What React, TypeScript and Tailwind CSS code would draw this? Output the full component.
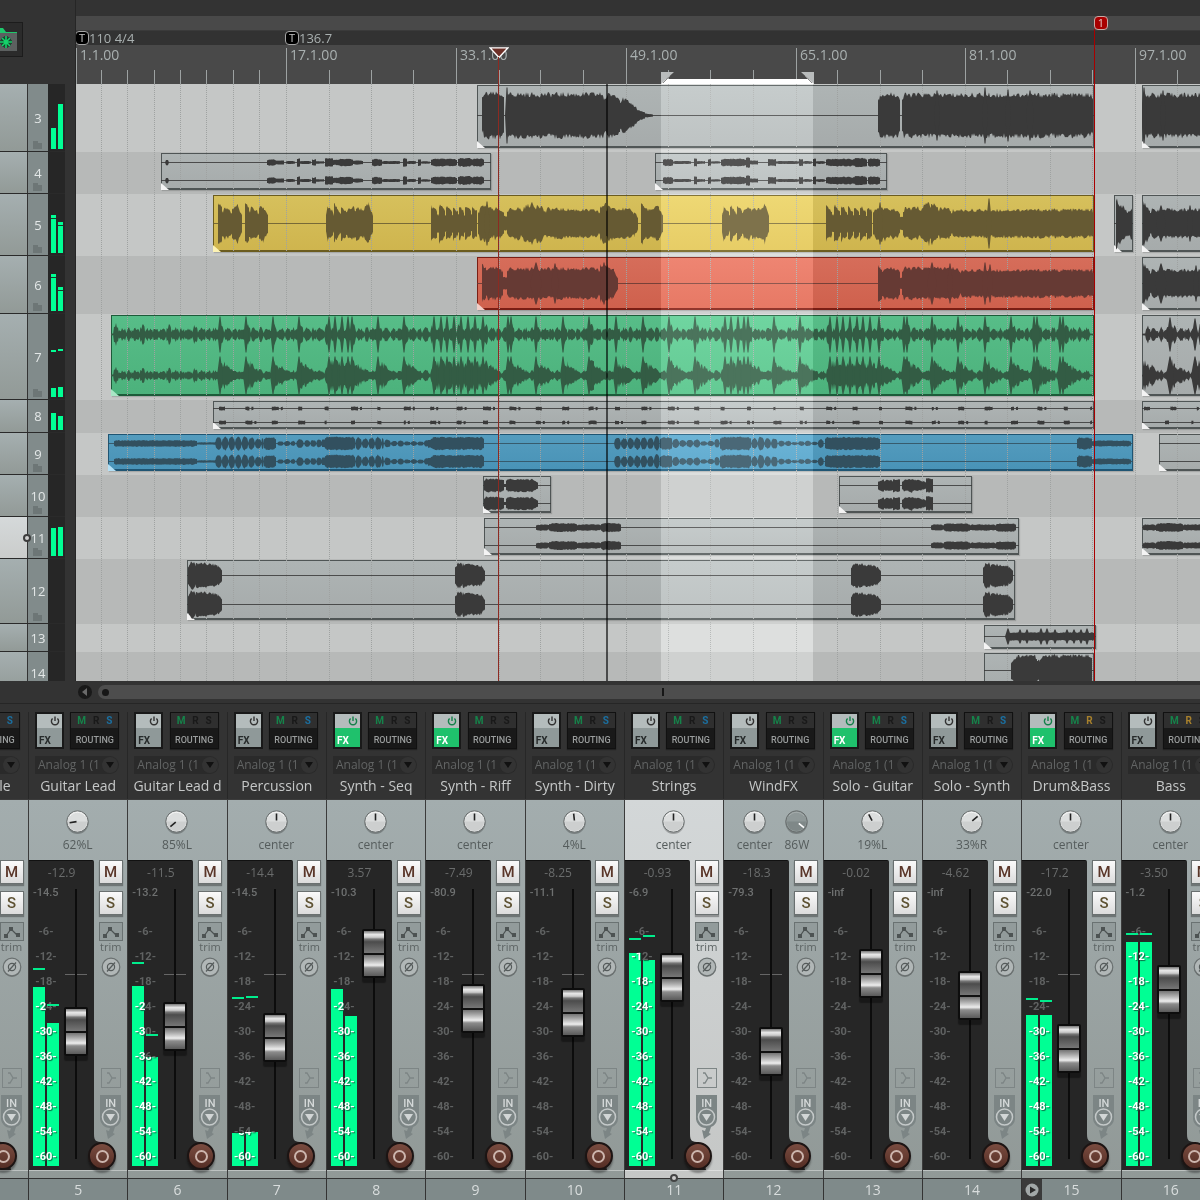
import React from "react";

type Seg = { x0: number; x1: number; a0: number; a1: number; lens?: boolean; rough?: boolean };
type Channel = { c: number; segs: Seg[]; spikes?: [number, number, number][] };
type Clip = { x: number; end: number; h: number; tone?: string; channels: Channel[] };
type Track = {
  n: number;
  h: number;
  folder?: boolean;
  meter?: [number, number];
  hold?: boolean;
  selected?: boolean;
  clips: Clip[];
};

const ORIGIN = 76;

/* ---------- waveform helpers ---------- */

const noise = (n: number) => {
  const v = Math.sin(n * 12.9898) * 43758.5453;
  return v - Math.floor(v);
};

const s = (x0: number, x1: number, a0: number, a1 = a0): Seg => ({ x0, x1, a0, a1 });
const lens = (x0: number, x1: number, a: number): Seg => ({ x0, x1, a0: a, a1: a, lens: true });

const beads = (x0: number, x1: number, step: number, a: number, vary = 0.3): Seg[] => {
  const out: Seg[] = [];
  for (let x = x0; x < x1 - 1; x += step) out.push(lens(x, Math.min(x + step + 0.4, x1), a * (1 - vary * noise(x))));
  return out;
};

function segPath(g: Seg, c: number) {
  const top: string[] = [];
  const bot: string[] = [];
  const len = g.x1 - g.x0;
  const step = Math.min(1, len / 4);
  for (let x = g.x0; x <= g.x1 + 0.01; x += step) {
    const t = (x - g.x0) / len;
    let a = g.a0 + (g.a1 - g.a0) * t;
    if (g.lens) a *= Math.pow(Math.max(0, Math.sin(Math.PI * t)), 0.5);
    else if (len > 8 && (t * len < 1.5 || (1 - t) * len < 1.5)) a *= 0.8;
    const low = g.rough ? 0.5 : 0.84;
    const span = g.rough ? 0.55 : 0.26;
    const up = a * (low + span * noise(Math.floor(x) + 3));
    const dn = a * (low + span * noise(Math.floor(x) + (g.rough ? 3 : 71)));
    top.push(`${x.toFixed(1)} ${(c - up).toFixed(1)}`);
    bot.unshift(`${x.toFixed(1)} ${(c + dn).toFixed(1)}`);
  }
  return `M${top.concat(bot).join("L")}Z`;
}

const spikePath = ([x, a, w]: [number, number, number], c: number) =>
  `M${x - w} ${c}L${x - 0.5} ${c - a}H${x + 0.5}L${x + w} ${c}L${x + 0.5} ${c + a}H${x - 0.5}Z`;

const dual = (a: number, b: number, segs: Seg[], spikes?: [number, number, number][]): Channel[] => [
  { c: a, segs, spikes },
  { c: b, segs, spikes },
];

/* ---------- arrangement data ---------- */

const t4a = [
  lens(165, 169, 3), s(267, 276, 3), s(276, 284, 2), s(286, 295, 1.5), s(297, 300, 4), s(300, 311, 1.5), s(312, 316, 3),
  s(316, 324, 1.2), s(325, 333, 4), s(333, 338, 2.5), s(338, 353, 3.6), s(353, 363, 2), s(372, 382, 3.5), s(382, 400, 1.5),
  s(403, 407, 4), s(407, 416, 1.5), s(418, 421, 3.2), s(421, 430, 1.2), s(431, 457, 3.6), s(458, 472, 4.2), s(472, 484, 3.8),
];
const t4b = [
  s(663, 673, 3.4), s(673, 691, 1.5), s(694, 697, 4), s(697, 705, 1.3), s(708, 711, 3.5), s(711, 720, 1.2), s(721, 746, 3.6),
  s(746, 750, 5), s(750, 758, 2), s(768, 776, 3.4), s(776, 799, 1.5), s(799, 803, 3.4), s(803, 812, 1.4), s(813, 816, 4),
  s(816, 825, 1.4), s(826, 853, 3.6), s(853, 867, 4.4), s(868, 880, 4),
];

const burst = (x: number): Seg[] => [
  s(x, x + 2, 8, 18), s(x + 2, x + 7, 16, 12), s(x + 8, x + 11, 19, 15), s(x + 11, x + 14, 14, 11), s(x + 15, x + 20, 17, 13),
  s(x + 20, x + 30, 14, 17), s(x + 30, x + 38, 16, 14), s(x + 38, x + 43, 15, 20), s(x + 43, x + 47, 18, 8), s(x + 6, x + 45, 10),
];
const stutter = (x: number): Seg[] => [
  s(x, x + 6, 18, 13), s(x + 8, x + 14, 19, 13), s(x + 15, x + 21, 18, 12), s(x + 22, x + 27, 17, 12),
  s(x + 28, x + 33, 17, 12), s(x + 34, x + 40, 17, 13), s(x + 41, x + 46, 16, 13), s(x + 4, x + 46, 9),
];

const t5: Seg[] = [
  s(218, 222, 21, 17), s(222, 232, 16, 13), s(232, 238, 15, 19), s(238, 242, 17, 9), s(245, 249, 21, 16), s(249, 259, 16, 13),
  s(259, 264, 15, 18), s(264, 268, 15, 9), ...burst(326), ...stutter(431), s(478, 487, 14, 20), s(487, 493, 18, 14),
  s(493, 504, 16, 13), s(503, 508, 7), s(507, 522, 14, 16), s(522, 535, 16, 21), s(535, 545, 21, 15), s(545, 600, 15, 13), s(600, 606, 16, 21),
  s(606, 634, 17, 13), s(634, 638, 13, 6), s(641, 644, 22, 17), s(644, 652, 16, 13), s(652, 659, 14, 18), s(659, 663, 16, 8),
  ...burst(722), ...stutter(826), s(873, 884, 14, 19), s(884, 890, 17, 14), s(890, 900, 16, 13), s(899, 904, 7), s(903, 920, 15, 16),
  s(920, 931, 16, 22), s(931, 938, 22, 15), s(938, 951, 16, 15), s(951, 1094, 13.5, 14),
];

const kicks = [220, 246, 273, 299, 329, 335, 342, 348, 352, 378, 404, 434, 441, 447, 454, 461, 468, 475, 483, 508, 511, 536, 563, 589,
  616, 643, 669, 695, 725, 731, 738, 744, 748, 774, 800, 830, 837, 843, 850, 857, 863, 870, 879, 904, 907, 932, 958, 985, 1011, 1034,
  1037, 1060, 1063];
const bumps = (x0: number, x1: number, a: number): Seg[] => {
  const out: Seg[] = [s(x0 - 3, x1, 1)];
  let i = 0;
  for (let x = x0; x < x1 - 6; x += 13.2, i++) {
    out.push({ ...lens(x, x + 6, a * (i % 2 ? 0.9 : 1.3)), rough: true }, { ...lens(x + 5, x + 14, a * 0.85), rough: true });
  }
  return out;
};
const decays = (xs: number[], a: number): Seg[] =>
  xs.flatMap((x) => [
    { ...s(x - 1, x + 5, a, a * 0.85), rough: true },
    { ...s(x + 4, x + 20, a * 0.8, 2), rough: true },
  ]);

const dots = (x0: number, x1: number, seed: number): Seg[] => {
  const out: Seg[] = [];
  for (let x = x0; x < x1; x += 26.4) {
    const w = 2 + Math.floor(noise(x + seed) * 7);
    out.push(s(x, Math.min(x + w, x1), 1.8));
    if (noise(x + seed + 5) > 0.6) out.push(s(x + w + 2, Math.min(x + w + 4, x1), 1.6));
  }
  return out;
};

const t9: Seg[] = [
  s(114, 197, 3.1), s(197, 217, 1.2), ...beads(215, 264, 6.6, 7), s(264, 276, 6), ...beads(277, 296, 6.6, 3), ...beads(296, 304, 8, 6),
  ...beads(304, 324, 6, 4), s(322, 326, 4), s(325, 355, 6.4), ...beads(355, 384, 6.6, 7), ...beads(384, 430, 6.6, 4.5, 0.7),
  s(428, 432, 4), s(431, 484, 6.2), ...beads(614, 660, 6.6, 7), s(660, 672, 6), ...beads(672, 720, 7, 5, 0.6), s(720, 751, 6.4),
  ...beads(751, 778, 6.6, 7), ...beads(778, 824, 6.6, 4.5, 0.7), s(825, 880, 6.2), s(1077, 1092, 5.8), s(1092, 1131, 2.8),
];

const blob = (x: number, w = 29, a = 12): Seg[] => [
  s(x, x + 3, a * 0.7, a),
  s(x + 2, x + 7, a),
  s(x + 6, x + w - 3, a, a * 0.8),
  s(x + w - 4, x + w, a * 0.8, a * 0.4),
];

const TRACKS: Track[] = [
  {
    n: 3, h: 68, folder: true, meter: [21, 45],
    clips: [
      {
        x: 477, end: 1094, h: 63,
        channels: [{
          c: 31,
          segs: [s(482, 504, 22), s(506, 605, 21.5), s(605, 620, 21), s(620, 630, 18, 14), s(629, 638, 14, 7), s(637, 645, 6, 3), s(645, 653, 2, 1),
            s(878, 900, 21.5), s(902, 1093, 21)],
          spikes: [[507, 28, 2], [985, 28, 3], [937, 25, 3], [1008, 26, 3], [1030, 25, 4]],
        }],
      },
      { x: 1142, end: 1260, h: 63, channels: [{ c: 31, segs: [s(1143, 1260, 21)], spikes: [[1144, 28, 3], [1163, 25, 3]] }] },
    ],
  },
  {
    n: 4, h: 42, folder: true,
    clips: [
      { x: 161, end: 491, h: 37, channels: dual(10, 28, t4a) },
      { x: 655, end: 887, h: 37, channels: dual(10, 28, t4b) },
    ],
  },
  {
    n: 5, h: 62, folder: true, meter: [38, 31], hold: true,
    clips: [
      { x: 213, end: 1094, h: 57, tone: "yellow", channels: [{ c: 29, segs: t5, spikes: [[989, 25, 3], [487, 22, 3], [880, 21, 3]] }] },
      { x: 1114, end: 1133, h: 57, channels: [{ c: 29, segs: [s(1116, 1122, 24, 18), s(1122, 1128, 18, 11), s(1128, 1132, 12, 16)] }] },
      { x: 1142, end: 1260, h: 57, channels: [{ c: 29, segs: [s(1143, 1150, 22, 14), s(1150, 1260, 14)], spikes: [[1161, 18, 5], [1190, 18, 3]] }] },
    ],
  },
  {
    n: 6, h: 58, folder: true, meter: [37, 24], hold: true,
    clips: [
      {
        x: 477, end: 1094, h: 53, tone: "red",
        channels: [{
          c: 27,
          segs: [s(482, 486, 19, 15), s(486, 503, 15.5), s(502, 508, 6), s(507, 600, 15), s(600, 608, 18), s(608, 614, 15), s(614, 618, 13, 6),
            s(878, 882, 19, 15), s(882, 900, 15.5), s(899, 903, 6), s(902, 960, 15.5), s(960, 1094, 13.5)],
          spikes: [[536, 21, 6], [555, 20, 4], [604, 21, 4], [932, 21, 5], [950, 20, 3], [985, 21, 3], [990, 19, 3]],
        }],
      },
      { x: 1142, end: 1260, h: 53, channels: [{ c: 27, segs: [s(1143, 1150, 20, 14), s(1150, 1260, 13.5)], spikes: [[1161, 20, 6], [1196, 18, 3]] }] },
    ],
  },
  {
    n: 7, h: 86, folder: true, meter: [9, 10],
    clips: [
      {
        x: 111, end: 1094, h: 81, tone: "green",
        channels: [
          { c: 20, segs: bumps(113, 1093, 8.5), spikes: kicks.map((k) => [k, 18, 2.5]) },
          { c: 61, segs: [...bumps(113, 1093, 6.5), ...decays(kicks, 17)], spikes: kicks.map((k) => [k, 19, 3]) },
        ],
      },
      {
        x: 1142, end: 1260, h: 81,
        channels: [
          { c: 20, segs: bumps(1145, 1260, 8.5), spikes: [[1170, 17, 3], [1195, 16, 3]] },
          { c: 61, segs: [...bumps(1145, 1260, 6.5), ...decays([1144, 1170, 1195], 17)], spikes: [[1170, 19, 4], [1195, 19, 4]] },
        ],
      },
    ],
  },
  {
    n: 8, h: 33, meter: [17, 14],
    clips: [
      { x: 213, end: 1094, h: 28, channels: [{ c: 8, segs: dots(219, 1092, 1) }, { c: 22, segs: dots(219, 1092, 9) }] },
      { x: 1142, end: 1260, h: 28, channels: [{ c: 8, segs: dots(1144, 1260, 2) }, { c: 22, segs: dots(1165, 1260, 4) }] },
    ],
  },
  {
    n: 9, h: 42, folder: true,
    clips: [
      { x: 108, end: 1133, h: 37, tone: "blue", channels: dual(10, 28, t9) },
      { x: 1159, end: 1260, h: 37, channels: dual(10, 28, []) },
    ],
  },
  {
    n: 10, h: 42, folder: true,
    clips: [
      { x: 483, end: 551, h: 37, channels: dual(10, 28, [s(484, 504, 6.4), s(504, 506, 1.5), s(506, 535, 6.2), s(535, 538, 5, 3)]) },
      { x: 839, end: 972, h: 37, channels: dual(10, 28, [s(878, 884, 4, 6.5), s(884, 894, 6, 5), s(893, 900, 6.4), s(902, 914, 5, 7), s(913, 926, 6, 4), s(926, 933, 7)]) },
    ],
  },
  {
    n: 11, h: 42, folder: true, meter: [28, 29], selected: true,
    clips: [
      { x: 484, end: 1019, h: 37, channels: dual(10, 28, [s(536, 549, 3), s(549, 577, 4.2), s(577, 601, 3), s(601, 621, 4.4), s(931, 944, 3), s(944, 970, 4), s(970, 996, 3), s(996, 1016, 4)]) },
      { x: 1142, end: 1260, h: 37, channels: dual(10, 28, [s(1143, 1156, 3), s(1156, 1183, 4.2), s(1183, 1260, 3)]) },
    ],
  },
  {
    n: 12, h: 65, folder: true,
    clips: [
      { x: 187, end: 1015, h: 60, channels: dual(16, 45, [...blob(188, 34, 13), ...blob(455, 30), ...blob(851, 30), ...blob(983, 30)]) },
    ],
  },
  {
    n: 13, h: 28,
    clips: [
      {
        x: 984, end: 1096, h: 24,
        channels: [{ c: 12, segs: [s(1006, 1095, 4)], spikes: [[1008, 8, 3], [1020, 7, 3], [1027, 7, 3], [1041, 8, 3], [1047, 8, 3], [1055, 7, 3], [1067, 7, 3], [1074, 7, 3], [1081, 7, 3], [1087, 8, 3]] }],
      },
    ],
  },
  {
    n: 14, h: 42,
    clips: [{ x: 984, end: 1094, h: 38, channels: [{ c: 18, segs: [s(1011, 1017, 8, 14), s(1016, 1037, 15), s(1037, 1040, 10), s(1040, 1092, 15)] }] }],
  },
];

const MAJORS: [number, string][] = [[76, "1.1.00"], [286, "17.1.00"], [456, "33.1.00"], [626, "49.1.00"], [796, "65.1.00"], [965, "81.1.00"], [1135, "97.1.00"]];
const MINORS = [101, 127, 154, 180, 206, 233, 259, 329, 371, 413, 499, 540, 583, 668, 710, 753, 837, 880, 922, 1007, 1050, 1092, 1177];

const TONES: Record<string, { box: string; wave: string; corner: string }> = {
  grey: { box: "border-[#4f5555] from-[#aeb4b4] to-[#a6abab]", wave: "text-[#3a3a3a]", corner: "text-[#f4f4f4]" },
  yellow: { box: "border-[#6b5c1f] from-[#d6c05c] to-[#cfb54e]", wave: "text-[#665a33]", corner: "text-[#fdf3b4]" },
  red: { box: "border-[#7a1e14] from-[#d66d5a] to-[#cf614d]", wave: "text-[#663a34]", corner: "text-[#f2cfc8]" },
  green: { box: "border-[#1c5c39] from-[#57bd88] to-[#4cb27c]", wave: "text-[#335c44]", corner: "text-[#a9e6c5]" },
  blue: { box: "border-[#1f5573] from-[#549cbe] to-[#4993b7]", wave: "text-[#32505f]", corner: "text-[#b5e0f5]" },
};

function ClipView({ clip }: { clip: Clip }) {
  const tone = TONES[clip.tone ?? "grey"];
  const w = clip.end - clip.x;
  return (
    <div
      className={`absolute top-0 border border-b-2 bg-linear-to-b shadow-[1px_1px_1px_rgba(0,0,0,0.15)] ${tone.box}`}
      style={{ left: clip.x - ORIGIN, width: w, height: clip.h }}
    >
      <svg className={`absolute -top-px -left-px z-10 ${tone.wave}`} width={w} height={clip.h} viewBox={`${clip.x} 1 ${w} ${clip.h}`} aria-hidden="true">
        {clip.channels.map((ch, i) => (
          <g key={i} fill="currentColor">
            <rect x={clip.x} y={ch.c} width={w} height={1} opacity={0.85} />
            <path d={ch.segs.map((g) => segPath(g, ch.c + 0.5)).join("")} />
            {ch.spikes && <path d={ch.spikes.map((p) => spikePath(p, ch.c + 0.5)).join("")} />}
          </g>
        ))}
      </svg>
      <svg className={`absolute -bottom-0.5 -left-px ${tone.corner}`} width="8" height="7" aria-hidden="true">
        <path d="M0 0L8 7H0Z" fill="currentColor" />
      </svg>
    </div>
  );
}

function Ruler() {
  return (
    <div className="h-[84px] pt-4">
      <div className="relative h-[14px] bg-[#494949]">
        <button type="button" className="absolute top-0 z-30 h-[14px] w-[14px] rounded-[4px] border border-[#c9a9a5] bg-[#a80000] text-center text-[11px] leading-[12px] text-[#e6c8c4]" style={{ left: 1094 - ORIGIN }}>
          1
        </button>
      </div>
      <div className="relative h-[15px] border-t border-[#3a3a3a] bg-[#323232]">
        {[[75, "110 4/4"], [285, "136.7"]].map(([x, t]) => (
          <div key={t} className="absolute top-0 flex items-center" style={{ left: (x as number) - ORIGIN }}>
            <span className="h-[14px] w-[14px] rounded-[4px] border border-[#a5a5a5] bg-black text-center text-[11px] leading-[12px] text-[#c4c4c4]">T</span>
            <span className="text-[13px] leading-[14px] text-[#a9b0b0]">{t}</span>
          </div>
        ))}
      </div>
      <div className="relative h-[39px] overflow-hidden bg-[#494949] text-[#a9b0b0]">
        {MAJORS.map(([x, t]) => (
          <div key={t} className="absolute top-[3px] bottom-0 border-l border-[#9da2a2] pl-[3px] text-[14px] leading-[13px]" style={{ left: x - ORIGIN }}>
            {t}
          </div>
        ))}
        {MINORS.map((x) => (
          <div key={x} className="absolute bottom-0 h-[14px] w-px bg-[#9da2a2]" style={{ left: x - ORIGIN }} />
        ))}
        <svg className="absolute bottom-0" style={{ left: 661 - ORIGIN }} width="153" height="12" aria-hidden="true">
          <path d="M0 7H153V12H0Z" fill="#fff" />
          <path d="M0 0H13L0 12Z" fill="#b9bcbc" />
          <path d="M153 0H140L153 12Z" fill="#b9bcbc" />
          <path d="M2 11L9 4M151 11L144 4" stroke="#8c8c8c" />
        </svg>
        <svg className="absolute top-[2px]" style={{ left: 489 - ORIGIN }} width="20" height="12" aria-hidden="true">
          <path d="M1 .8H19L10 10.5Z" fill="#6d3028" stroke="#fff" strokeWidth="1.3" />
        </svg>
      </div>
    </div>
  );
}

function Arrange() {
  return (
    <section aria-label="Arrange view" className="relative min-w-0 flex-1 overflow-hidden">
      <Ruler />
      <div className="relative h-[597px] overflow-hidden">
        {TRACKS.map((t, i) => (
          <div key={t.n} className={`relative ${i % 2 ? "bg-[#b7b9b8]" : "bg-[#c5c7c6]"}`} style={{ height: t.h }}>
            <div className="absolute inset-x-0 top-px">
              {t.clips.map((c) => (
                <ClipView key={c.x} clip={c} />
              ))}
            </div>
          </div>
        ))}
        {[...MINORS, ...MAJORS.slice(1).map((m) => m[0])].map((x) => (
          <div key={x} className="absolute inset-y-0 border-l border-dotted border-[#9fa2a1]" style={{ left: x - ORIGIN }} />
        ))}
        <div className="absolute inset-y-0 z-20 w-[152px] bg-[#181818] mix-blend-plus-lighter" style={{ left: 661 - ORIGIN }} />
        <div className="absolute inset-y-0 z-20 w-[2px] bg-black/60" style={{ left: 606 - ORIGIN }} />
      </div>
      <div className="absolute top-[57px] bottom-0 z-20 w-px bg-[#8c2a22]" style={{ left: 498 - ORIGIN }} />
      <div className="absolute top-[29px] bottom-0 z-20 w-px bg-[#a80000]" style={{ left: 1094 - ORIGIN }} />
    </section>
  );
}

function TrackPanel() {
  return (
    <aside aria-label="Track control panel" className="w-[65px] shrink-0">
      <div className="h-[84px] pt-[22px]">
        <button type="button" aria-label="Project files" className="flex h-[35px] w-[23px] items-center border border-l-0 border-[#1c1c1c] bg-[#2b2b2b]">
          <svg width="18" height="25" aria-hidden="true">
            <path d="M0 1H3L6 5H17V8H0Z" fill="#1ec76b" />
            <path d="M0 6H17V24H0Z" fill="#5c6060" />
            <path d="M6 9V21M0 15H12M2 11L10 19M10 11L2 19" stroke="#173d29" strokeWidth="3.4" />
            <path d="M6 9V21M0 15H12M2 11L10 19M10 11L2 19" stroke="#16d06a" strokeWidth="1.6" />
          </svg>
        </button>
      </div>
      <div className="h-[597px] overflow-hidden bg-[#262626]">
        {TRACKS.map((t) => (
          <div key={t.n} className="flex border-b border-[#2a2a2a]" style={{ height: t.h }}>
            <div className={`relative w-[28px] border-r border-[#333] bg-linear-to-b ${t.selected ? "from-[#d5d9da] to-[#cacccb]" : "from-[#a5afb0] to-[#929a97]"}`}>
              {t.selected && <span className="absolute top-1/2 -right-1 z-10 h-2 w-2 -translate-y-1/2 rounded-full border-2 border-[#3c3c3c] bg-[#cfcfcf]" />}
            </div>
            <div className="relative flex w-[20px] items-center justify-center bg-[#818b8b] pt-[2px] text-[13px] text-[#e3e7e7]">
              {t.n}
              {t.folder && (
                <svg className="absolute bottom-[2px] left-[5px]" width="10" height="8" aria-hidden="true">
                  <path d="M0 0H5V2H9V8H0Z" fill="#6d7676" />
                </svg>
              )}
            </div>
            <div className="relative flex items-end gap-[2px] pb-[2px] pl-[3px]">
              {t.meter?.map((m, i) => (
                <div key={i} className="w-[5px] bg-[#00ff94]" style={{ height: m }}>
                  {t.hold && <div className="h-[4px] border-b border-[#163b2a]" />}
                </div>
              ))}
              {t.n === 7 && (
                <>
                  <i className="absolute top-[36px] left-[3px] h-[2px] w-[5px] bg-[#00ff94]" />
                  <i className="absolute top-[35px] left-[10px] h-[2px] w-[5px] bg-[#00ff94]" />
                </>
              )}
            </div>
          </div>
        ))}
      </div>
    </aside>
  );
}

/* ---------- mixer ---------- */

type Strip = {
  n: string;
  name: string;
  pan: string;
  angle: number;
  vol: string;
  peak: string;
  level?: [number, number];
  hold?: [number, number];
  fader: number;
  fx?: boolean;
  solo?: boolean;
  rec?: boolean;
  width?: string;
  selected?: boolean;
  folder?: boolean;
};

const FLOOR = 1166;
const STRIPS: Strip[] = [
  { n: "4", name: "Gtr Single", pan: "center", angle: 0, vol: "-9.1", peak: "-inf", fader: 1010, solo: true },
  { n: "5", name: "Guitar Lead", pan: "62%L", angle: -99, vol: "-12.9", peak: "-14.5", level: [987, 1023], hold: [968, 1004], fader: 1031, solo: true },
  { n: "6", name: "Guitar Lead d", pan: "85%L", angle: -130, vol: "-11.5", peak: "-13.2", level: [986, 1057], hold: [962, 1034], fader: 1026 },
  { n: "7", name: "Percussion", pan: "center", angle: 0, vol: "-14.4", peak: "-14.5", level: [1133, 1132], hold: [997, 996], fader: 1037, solo: true },
  { n: "8", name: "Synth - Seq", pan: "center", angle: 0, vol: "3.57", peak: "-10.3", level: [989, 1016], fader: 953, fx: true },
  { n: "9", name: "Synth - Riff", pan: "center", angle: 0, vol: "-7.49", peak: "-80.9", fader: 1008, fx: true },
  { n: "10", name: "Synth - Dirty", pan: "4%L", angle: -6, vol: "-8.25", peak: "-11.1", fader: 1012, solo: true },
  { n: "11", name: "Strings", pan: "center", angle: 0, vol: "-0.93", peak: "-6.9", level: [953, 960], hold: [938, 935], fader: 977, solo: true, selected: true },
  { n: "12", name: "WindFX", pan: "center", angle: 0, vol: "-18.3", peak: "-79.3", fader: 1051, width: "86W" },
  { n: "13", name: "Solo - Guitar", pan: "19%L", angle: -28, vol: "-0.02", peak: "-inf", fader: 973, fx: true, solo: true },
  { n: "14", name: "Solo - Synth", pan: "33%R", angle: 50, vol: "-4.62", peak: "-inf", fader: 995, solo: true },
  { n: "15", name: "Drum&Bass", pan: "center", angle: 0, vol: "-17.2", peak: "-22.0", level: [1015, 1015], hold: [998, 1000], fader: 1048, fx: true, rec: true, folder: true },
  { n: "16", name: "Bass", pan: "center", angle: 0, vol: "-3.50", peak: "-1.2", level: [942, 942], hold: [933, 933], fader: 989, rec: true },
];

const SCALE = ["-6-", "-12-", "-18-", "-24-", "-30-", "-36-", "-42-", "-48-", "-54-", "-60-"];

function Knob({ label, angle, dark }: { label: string; angle: number; dark?: boolean }) {
  return (
    <label className="flex flex-col items-center gap-1">
      <span className="relative h-[23px] w-[23px]">
        <svg width="23" height="25" viewBox="0 0 23 25" aria-hidden="true">
          <circle cx="11.5" cy="13" r="11" fill="#000" opacity=".25" />
          <circle cx="11.5" cy="11.5" r="10.7" fill={dark ? "#8f9898" : "#dcdede"} stroke="#676c6c" />
          <path d="M2 11.5A9.5 9.5 0 0 0 21 11.5Z" fill={dark ? "#7f8888" : "#cdcfcf"} />
          <path d="M4 6A9.5 9.5 0 0 1 19 6" stroke="#f6f6f6" strokeWidth="1" fill="none" opacity={dark ? 0.2 : 1} />
          <path d={dark ? "M11.5 8.5V1.8" : "M11.5 10.5V3.5"} stroke={dark ? "#fff" : "#222"} strokeWidth="1.6" transform={`rotate(${angle} 11.5 11.5)`} />
        </svg>
        <input type="range" aria-label={label} min={-135} max={135} defaultValue={angle} className="absolute inset-0 h-full w-full opacity-0" />
      </span>
      <span className="text-[12px] leading-[16px] text-[#555c5c]">{label}</span>
    </label>
  );
}

function ScaleLabels({ className, clip }: { className: string; clip?: string }) {
  return (
    <div className={`absolute inset-x-0 top-0 h-[282px] pt-[35px] text-center font-[Roboto,sans-serif] text-[11px] font-bold whitespace-nowrap ${className}`} style={{ clipPath: clip }}>
      {SCALE.map((t) => (
        <div key={t} className="h-[25px] leading-[25px]">{t}</div>
      ))}
    </div>
  );
}

function Meter({ st }: { st: Strip }) {
  const top = (v: number) => v - (FLOOR - 282);
  return (
    <div className="relative flex h-[282px] w-[26px] items-end gap-[2px]">
      <ScaleLabels className="text-[#606262]" />
      {st.level?.map((v, i) => (
        <div key={i} className="relative w-[12px] bg-[#00ff94]" style={{ height: FLOOR - v }} />
      ))}
      {st.hold && (
        <>
          <i className="absolute left-0 h-[2px] w-[12px] bg-[#00ec8c]" style={{ top: top(st.hold[0]) }} />
          <i className="absolute right-0 h-[2px] w-[12px] bg-[#00ec8c]" style={{ top: top(st.hold[1]) }} />
        </>
      )}
      {st.level && (
        <ScaleLabels
          className="text-white [text-shadow:1px_1px_1px_#0a6b45]"
          clip={`polygon(0 ${top(st.level[0])}px, 50% ${top(st.level[0])}px, 50% ${top(st.level[1])}px, 100% ${top(st.level[1])}px, 100% 100%, 0 100%)`}
        />
      )}
      <span className="absolute top-0 left-0 font-[Roboto,sans-serif] text-[11px] leading-[17px] font-medium text-[#6e7070]">{st.peak}</span>
    </div>
  );
}

const SQUARE = "flex h-[24px] w-[24px] items-center justify-center border border-[#6a7070] bg-linear-to-b from-[#fafafa] to-[#dcdcdc] font-[Roboto,sans-serif] text-[15px] leading-none font-medium shadow-[0_2px_1px_rgba(0,0,0,0.3)]";

function MixerStrip({ st }: { st: Strip }) {
  const light = st.selected ? "from-[#d3d7d8] to-[#c5c7c6]" : "from-[#a3adae] to-[#919997]";
  return (
    <div className="w-full min-w-[99px]">
      <div className="h-[95px] pt-2">
        <div className="border-l border-[#272727]">
          <div className="flex justify-between pr-[8px] pl-[6px]">
            <button type="button" aria-label="FX" className="relative h-[37px] w-[29px] border-2 border-[#191919] font-[Roboto,sans-serif] text-[10px] leading-none font-bold">
              <span className="block h-[14px] bg-[#b4bcbc]">
                <svg className={`ml-auto ${st.fx ? "text-[#15814a]" : "text-[#333]"}`} width="13" height="14" viewBox="0 0 13 14" aria-hidden="true">
                  <path d="M3.6 4.5A3.6 3.6 0 1 0 8.4 4.5M6 2.5V7" fill="none" stroke="currentColor" strokeWidth="1.4" />
                </svg>
              </span>
              <span className={`flex h-[19px] items-center pt-[6px] pl-[2px] ${st.fx ? "bg-[#1fc16c] text-white" : "bg-[#8f9999] text-[#272b2b]"}`}>FX</span>
            </button>
            <button type="button" aria-label="Routing" className="h-[37px] w-[49px] border border-[#111] bg-[#191919] font-[Roboto,sans-serif] shadow-[0_1px_1px_#222]">
              <span className="flex h-[15px] items-center justify-between bg-[#2f2f2f] px-[6px] pt-px text-[10px] leading-none font-bold">
                <span className="text-[#15834a]">M</span>
                <span className={st.rec ? "text-[#a8812c]" : "text-[#191919]"}>R</span>
                <span className={st.solo ? "text-[#1b6fa0]" : "text-[#191919]"}>S</span>
              </span>
              <span className="flex h-[20px] items-center justify-center pt-[4px] text-[9px] leading-none font-medium text-[#9a9d9d]">ROUTING</span>
            </button>
          </div>
          <div className="relative mt-[7px] mr-[8px] ml-[6px] flex">
            <select aria-label={`${st.name} input`} className="h-[18px] w-full appearance-none overflow-hidden rounded-r-full bg-[#2a2a2a] pr-0 pl-[3px] text-[12px] leading-[18px] text-[#626464]">
              <option>Analog 1 (1</option>
            </select>
            <svg className="pointer-events-none absolute top-px right-px" width="16" height="16" aria-hidden="true">
              <circle cx="8" cy="8" r="8" fill="#333" />
              <path d="M4 5H12L8 11Z" fill="#111" />
            </svg>
          </div>
          <div className="h-[25px] overflow-hidden text-center text-[14px] leading-[24px] whitespace-nowrap text-[#c6c8c8]">{st.name}</div>
        </div>
      </div>
      <div className={`relative border-t border-l border-[#3b3b3b] bg-linear-to-b ${light}`}>
        <div className="flex h-[60px] justify-center gap-3 pt-[10px] pr-px">
          <Knob label={st.pan} angle={st.angle} />
          {st.width && <Knob label={st.width} angle={130} dark />}
        </div>
        <div className="flex h-[310px]">
          <div className="w-[65px] shrink-0 rounded-tr-[2px] border-t border-[#111] bg-[#262626]">
            <div className="h-[23px] text-center text-[12px] leading-[23px] text-[#6a6c6c]">{st.vol}</div>
            <div className="flex gap-[5px] pl-1">
              <Meter st={st} />
              <div className="relative mt-[5px] h-[270px] w-[24px]">
                <i className="absolute inset-x-px top-[85px] h-px bg-[#666]" />
                <input
                  type="range"
                  aria-label={`${st.name} volume`}
                  min={0}
                  max={221}
                  defaultValue={1134 - st.fader}
                  className="relative h-[270px] w-[24px] appearance-none bg-[linear-gradient(#0c0c0c,#0c0c0c)] bg-[length:2px_100%] bg-center bg-no-repeat [direction:rtl] [writing-mode:vertical-lr] [&::-webkit-slider-thumb]:h-[49px] [&::-webkit-slider-thumb]:w-[24px] [&::-webkit-slider-thumb]:appearance-none [&::-webkit-slider-thumb]:rounded-[2px] [&::-webkit-slider-thumb]:border-2 [&::-webkit-slider-thumb]:border-[#0d0d0d] [&::-webkit-slider-thumb]:bg-[linear-gradient(to_bottom,#777_0,#e8e8e8_8%,#c9c9c9_14%,#777_18%,#4c4c4c_24%,#757575_48%,#111_49%,#111_53%,#777_54%,#aaa_64%,#ededed_76%,#8c8c8c_82%,#5a5a5a_100%)] [&::-webkit-slider-thumb]:shadow-[0_5px_1px_rgba(0,0,0,0.35)]"
                />
              </div>
            </div>
          </div>
          <div className="relative flex min-w-0 flex-1 flex-col items-center">
            <button type="button" aria-label={`Mute ${st.name}`} className={`${SQUARE} text-[#5a3629]`}>M</button>
            <button type="button" aria-label={`Solo ${st.name}`} className={`mt-[7px] ${SQUARE} text-[#5e5233]`}>S</button>
            <button type="button" aria-label="Envelope" className="mt-[7px] flex h-[19px] w-[24px] items-center justify-center border border-[#6a7272] bg-[#929b9b] text-[#4d5353]">
              <svg width="18" height="14" aria-hidden="true">
                <path d="M3 11L8 4L14 10" fill="none" stroke="currentColor" strokeWidth="1.2" />
                <path d="M1 9H5V13H1ZM6 2H10V6H6ZM13 8H17V12H13Z" fill="currentColor" />
              </svg>
            </button>
            <span className="h-[12px] text-[11px] leading-[11px] text-[#5d6464]">trim</span>
            <button type="button" aria-label="Phase" className="mt-[4px] h-[20px] w-[20px]">
              <svg width="20" height="21" aria-hidden="true">
                <circle cx="10" cy="11" r="9" fill="#000" opacity=".25" />
                <circle cx="10" cy="10" r="8.8" fill="#b1b7b7" stroke="#6a7070" strokeWidth="1.2" />
                <circle cx="10" cy="10" r="3.6" fill="none" stroke="#555b5b" strokeWidth="1.2" />
                <path d="M6 14.5L14 5.5" stroke="#555b5b" strokeWidth="1.2" />
              </svg>
            </button>
            <button type="button" aria-label="Pan law" className="mt-[91px] h-[20px] w-[20px] border border-[#7d8585] text-[#7d8585]">
              <svg width="18" height="18" aria-hidden="true">
                <path d="M5 4H7L10 9L7 14H5M10 9H14" fill="none" stroke="currentColor" strokeWidth="1.3" />
              </svg>
            </button>
            <button type="button" aria-label="Input" className="relative mt-[7px] h-[46px] w-[21px] text-center font-[Roboto,sans-serif] text-[11px] leading-[17px] font-medium text-[#d4d8d8]">
              <svg className="absolute inset-0" width="21" height="46" aria-hidden="true">
                <path d="M0 0H21V22A10 10 0 0 1 15 32L13 38L15 39L8 44L6 35L9 36L10 33A10 10 0 0 1 0 22Z" fill="#7c8585" />
                <circle cx="10.500" cy="22" r="8" fill="#7c8585" stroke="#c4c9c9" strokeWidth="1.5" />
                <path d="M6 19H15L10.500 26Z" fill="#d2d6d6" />
              </svg>
              <span className="absolute inset-x-0 top-0">IN</span>
            </button>
            <svg className="absolute bottom-0 left-0" width="16" height="36" aria-hidden="true">
              <path d="M0 0C0 7 2 8 9 8L16 36H0Z" fill="#262626" />
            </svg>
            <button type="button" aria-label={`Arm ${st.name}`} className="absolute bottom-0 -left-[6px] flex h-[28px] w-[28px] items-center justify-center rounded-full border-2 border-[#1c1413] bg-linear-to-b from-[#7a4c40] to-[#552e25] shadow-[0_3px_2px_rgba(0,0,0,0.35)]">
              <span className="h-[13px] w-[13px] rounded-full border-2 border-[#cdb5ad]" />
            </button>
          </div>
        </div>
        <div className="h-[8px] border-t border-t-white/40" />
        {st.selected && <span className="absolute -bottom-[4px] left-1/2 z-10 h-[8px] w-[8px] -translate-x-1/2 rounded-full border-2 border-[#444] bg-[#ccc]" />}
      </div>
      <div className="relative h-[22px] border-t border-l border-[#333] bg-[#7f8a8a] text-center text-[14px] leading-[22px] text-[#d9dddd]">
        {st.folder && (
          <span className="absolute inset-y-0 left-0 flex w-[20px] items-center justify-center bg-[#3a3a3a]">
            <svg width="14" height="14" aria-hidden="true">
              <circle cx="7" cy="7" r="6.500" fill="#a2a8a8" />
              <path d="M5 3.500L11 7L5 10.500Z" fill="#2a2a2a" />
            </svg>
          </span>
        )}
        {st.n}
      </div>
    </div>
  );
}

export default function App() {
  return (
    <main className="min-h-screen overflow-hidden bg-[#333] font-['Open_Sans','Noto_Sans',sans-serif]">
      <div className="flex">
        <TrackPanel />
        <div className="w-[11px] shrink-0 border-r border-[#262626]" />
        <Arrange />
      </div>
      <div className="flex h-[23px] items-center gap-[6px] border-b border-[#262626] pl-[78px]">
        <button type="button" aria-label="Scroll left" className="flex h-[14px] w-[14px] items-center justify-center rounded-full bg-[#191919]">
          <svg width="8" height="8" aria-hidden="true">
            <path d="M6 0V8L1 4Z" fill="#6a6a6a" />
          </svg>
        </button>
        <div className="relative flex h-[14px] flex-1 items-center rounded-l-full bg-[#4d4d4d] pl-[4px]">
          <span className="h-[7px] w-[7px] rounded-full bg-[#161616]" />
          <span className="absolute top-[3px] left-[564px] h-[8px] w-[2px] bg-[#161616]" />
        </div>
      </div>
      <section aria-label="Mixer" className="-mr-5 flex">
        <div className="flex w-[28px] shrink-0 justify-end overflow-hidden">
          <div className="w-[99px] shrink-0">
            <MixerStrip st={STRIPS[0]} />
          </div>
        </div>
        {STRIPS.slice(1).map((st) => (
          <div key={st.n} className="flex-1">
            <MixerStrip st={st} />
          </div>
        ))}
      </section>
    </main>
  );
}
